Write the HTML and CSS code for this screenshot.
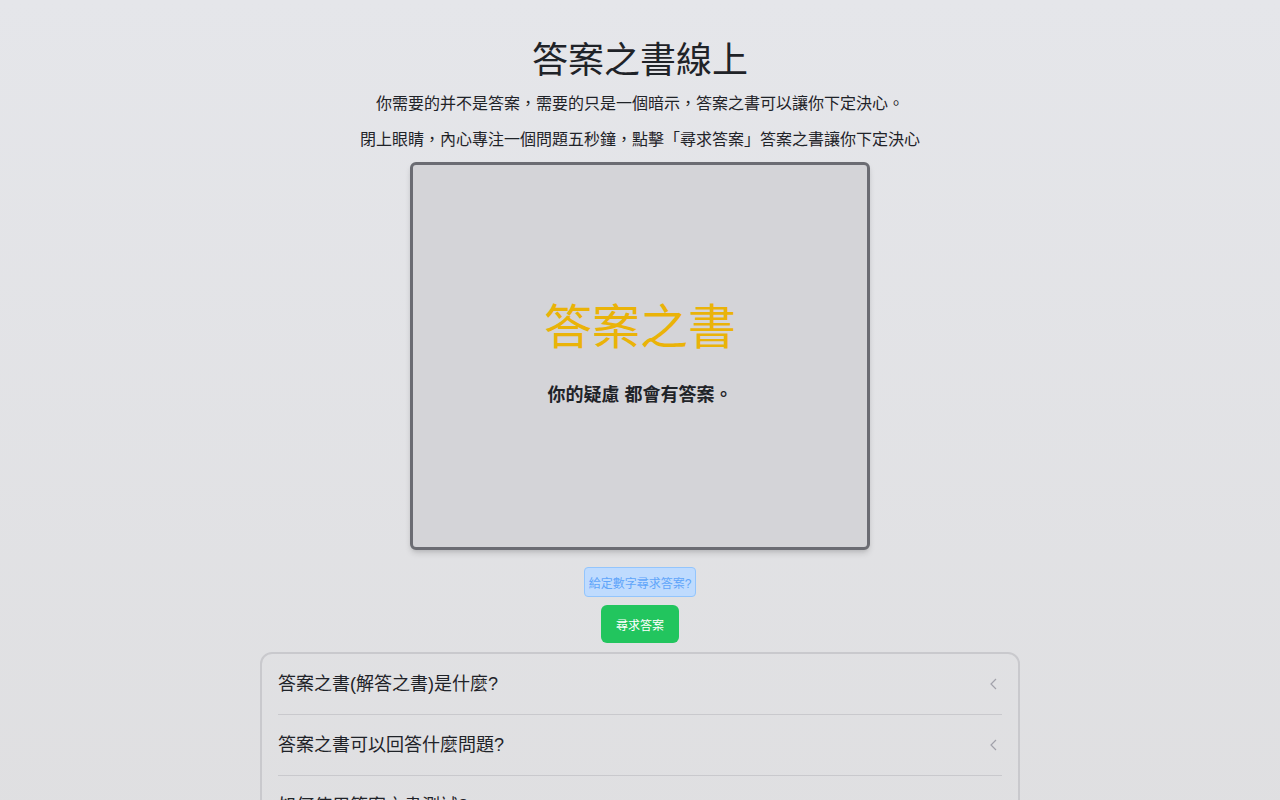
FILE: index.html
```html
<!DOCTYPE html>
<html lang="zh-TW">
<head>
    <meta charset="utf-8">
    <title>答案之書線上</title>
    <link rel="stylesheet" href="styles.css">
</head>
<body>
    <main class="page">
        <h1 class="title">答案之書線上</h1>
        <p class="intro">你需要的并不是答案，需要的只是一個暗示，答案之書可以讓你下定決心。</p>
        <p class="intro">閉上眼睛，內心專注一個問題五秒鐘，點擊「尋求答案」答案之書讓你下定決心</p>

        <div class="book">
            <div class="book-title">答案之書</div>
            <div class="book-sub">你的疑慮 都會有答案。</div>
        </div>

        <button class="number-btn">給定數字尋求答案?</button>
        <button class="seek-btn">尋求答案</button>

        <div class="faq">
            <div class="faq-item">
                <span>答案之書(解答之書)是什麼?</span>
                <svg class="chev" width="10" height="14" viewBox="0 0 10 14"><path d="M7 2 L2 7 L7 12" fill="none" stroke="#a1a1aa" stroke-width="1.2"/></svg>
            </div>
            <div class="faq-item">
                <span>答案之書可以回答什麼問題?</span>
                <svg class="chev" width="10" height="14" viewBox="0 0 10 14"><path d="M7 2 L2 7 L7 12" fill="none" stroke="#a1a1aa" stroke-width="1.2"/></svg>
            </div>
            <div class="faq-item">
                <span>如何使用答案之書測試?</span>
                <svg class="chev" width="10" height="14" viewBox="0 0 10 14"><path d="M7 2 L2 7 L7 12" fill="none" stroke="#a1a1aa" stroke-width="1.2"/></svg>
            </div>
        </div>
    </main>
</body>
</html>
```

FILE: styles.css
```css
html, body {
    margin: 0;
    padding: 0;
}

body {
    font-family: "Liberation Sans", "Noto Sans CJK TC", sans-serif;
    color: #1f2328;
    background: linear-gradient(to bottom, #e5e6ea, #dfdfe1);
    min-height: 800px;
}

.page {
    display: flex;
    flex-direction: column;
    align-items: center;
    padding-top: 41px;
}

.title {
    font-size: 36px;
    line-height: 40px;
    font-weight: normal;
    margin: 0 0 11px;
}

.intro {
    font-size: 16px;
    line-height: 24px;
    margin: 0 0 12px;
}

.intro + .intro {
    margin-bottom: 10px;
}

/* the book */
.book {
    box-sizing: border-box;
    width: 460px;
    height: 388px;
    border: 3px solid #6b6c73;
    border-radius: 6px;
    background-color: #d4d4d8;
    box-shadow: 0 4px 6px -1px rgba(0, 0, 0, 0.15), 0 2px 4px -2px rgba(0, 0, 0, 0.1);
    display: flex;
    flex-direction: column;
    align-items: center;
    justify-content: center;
}

.book-title {
    font-size: 48px;
    line-height: 48px;
    color: #eab308;
    margin-bottom: 29px;
}

.book-sub {
    font-size: 18px;
    line-height: 28px;
    font-weight: bold;
    color: #1f2328;
}

/* buttons */
.number-btn {
    margin-top: 17px;
    height: 30px;
    padding: 0 4px;
    font-family: inherit;
    font-size: 12px;
    color: #60a5fa;
    background-color: #bfdbfe;
    border: 1px solid #93c5fd;
    border-radius: 4px;
}

.seek-btn {
    margin-top: 8px;
    height: 38px;
    padding: 0 15px;
    font-family: inherit;
    font-size: 12px;
    color: #fff;
    background-color: #22c55e;
    border: none;
    border-radius: 6px;
}

/* faq */
.faq {
    box-sizing: border-box;
    width: 760px;
    margin-top: 9px;
    padding: 0 16px;
    border: 2px solid #c9c9cd;
    border-radius: 12px;
}

.faq-item {
    display: flex;
    justify-content: space-between;
    align-items: center;
    padding: 16px 0;
    font-size: 18px;
    line-height: 28px;
    border-bottom: 1px solid #c9c9cd;
}

.chev {
    margin-right: 3px;
}
```
